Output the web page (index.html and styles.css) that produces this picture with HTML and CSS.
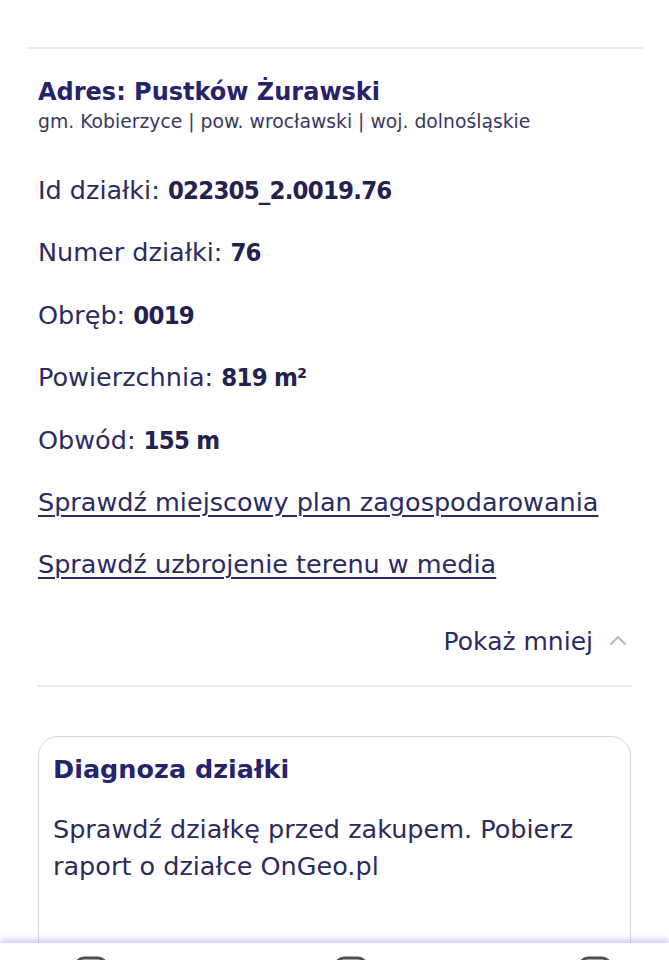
FILE: index.html
```html
<!DOCTYPE html>
<html lang="pl">

<head>
  <meta name="viewport" content="width=device-width, initial-scale=1.0">
  <meta charset="utf-8">
  <title>Działka 76</title>

  <link rel="stylesheet" href="styles.css">
</head>

<body>
  <div class="page">
    <hr class="rule rule-top">

    <div class="plot">
      <h2 class="plot-title">Adres: Pustków Żurawski</h2>
      <p class="plot-sub">gm. Kobierzyce | pow. wrocławski | woj. dolnośląskie</p>

      <ul class="plot-info">
        <li>Id działki: <b>022305_2.0019.76</b></li>
        <li>Numer działki: <b>76</b></li>
        <li>Obręb: <b>0019</b></li>
        <li>Powierzchnia: <b>819 m²</b></li>
        <li>Obwód: <b>155 m</b></li>
        <li><a href="#">Sprawdź miejscowy plan zagospodarowania</a></li>
        <li><a href="#">Sprawdź uzbrojenie terenu w media</a></li>
      </ul>

      <div class="toggle">
        <span>Pokaż mniej</span>
        <svg width="18" height="12" viewBox="0 0 18 12">
          <path d="M2 10 L9 3 L16 10" fill="none" stroke="#b7b7c2" stroke-width="2" stroke-linecap="round" stroke-linejoin="round"/>
        </svg>
      </div>

      <hr class="rule">

      <div class="card">
        <h3 class="card-title">Diagnoza działki</h3>
        <p class="card-text">Sprawdź działkę przed zakupem. Pobierz raport o działce OnGeo.pl</p>
      </div>
    </div>
  </div>

  <nav class="tabbar">
    <span class="tab tab-1"><svg width="34" height="30" viewBox="0 0 34 30"><rect x="2" y="2" width="30" height="30" rx="8" fill="none" stroke="#505050" stroke-width="3"/></svg></span>
    <span class="tab tab-2"><svg width="34" height="30" viewBox="0 0 34 30"><rect x="2" y="2" width="30" height="30" rx="8" fill="none" stroke="#505050" stroke-width="3"/></svg></span>
    <span class="tab tab-3"><svg width="34" height="30" viewBox="0 0 34 30"><rect x="2" y="2" width="30" height="30" rx="8" fill="none" stroke="#505050" stroke-width="3"/></svg></span>
  </nav>
</body>

</html>
```

FILE: styles.css
```css
body {
  margin: 0;
  background: #fff;
  font-family: "DejaVu Sans", "Noto Sans", sans-serif;
  color: #2c2b5e;
}

.page {
  padding-top: 47px;
  height: 913px;
  overflow: hidden;
}

.rule {
  margin: 0;
  border: 0;
  border-top: 2px solid #ececee;
}

.rule-top {
  margin: 0 26px;
}

.plot {
  padding: 0 38px;
}

.plot-title {
  margin: 28px 0 0;
  font-size: 24px;
  line-height: 30px;
  font-weight: bold;
  color: #25246b;
}

.plot-sub {
  margin: 3px 0 0;
  font-size: 18.8px;
  line-height: 24px;
  color: #3a3960;
}

.plot-info {
  margin: 25px 0 0;
  padding: 0;
  list-style: none;
}

.plot-info li {
  font-size: 25.5px;
  line-height: 62.4px;
  height: 62.4px;
  white-space: nowrap;
}

.plot-info b {
  font-family: "DejaVu Sans Condensed", "DejaVu Sans", sans-serif;
  letter-spacing: -0.8px;
  color: #23224f;
}

.plot-info a {
  color: #2b2a63;
  text-decoration: underline;
  text-decoration-thickness: 2px;
  text-underline-offset: 4px;
}

.toggle {
  display: flex;
  justify-content: flex-end;
  align-items: center;
  gap: 16px;
  height: 40px;
  margin-top: 26px;
  padding-right: 4px;
  font-size: 25px;
  color: #2c2b5e;
}

.toggle svg {
  margin-top: -4px;
}

.plot > .rule {
  margin-top: 23px;
}

.card {
  margin-top: 49px;
  border: 1.5px solid #d5d5dd;
  border-radius: 20px;
  padding: 13px 14px 120px;
}

.card-title {
  margin: 0;
  font-size: 25.5px;
  line-height: 38px;
  font-weight: bold;
  color: #25246b;
}

.card-text {
  margin: 23px 0 0;
  font-size: 25.5px;
  line-height: 37px;
}

.tabbar {
  position: fixed;
  left: 0;
  right: 0;
  bottom: 0;
  height: 17px;
  background: #fff;
  box-shadow: 0 -3px 6px rgba(125, 115, 235, .4);
  display: flex;
  align-items: flex-start;
  overflow: hidden;
}

.tab {
  display: block;
  height: 30px;
  margin-top: 13px;
}

.tab-1 {
  margin-left: 74px;
}

.tab-2 {
  margin-left: 226px;
}

.tab-3 {
  margin-left: 210px;
}
```
